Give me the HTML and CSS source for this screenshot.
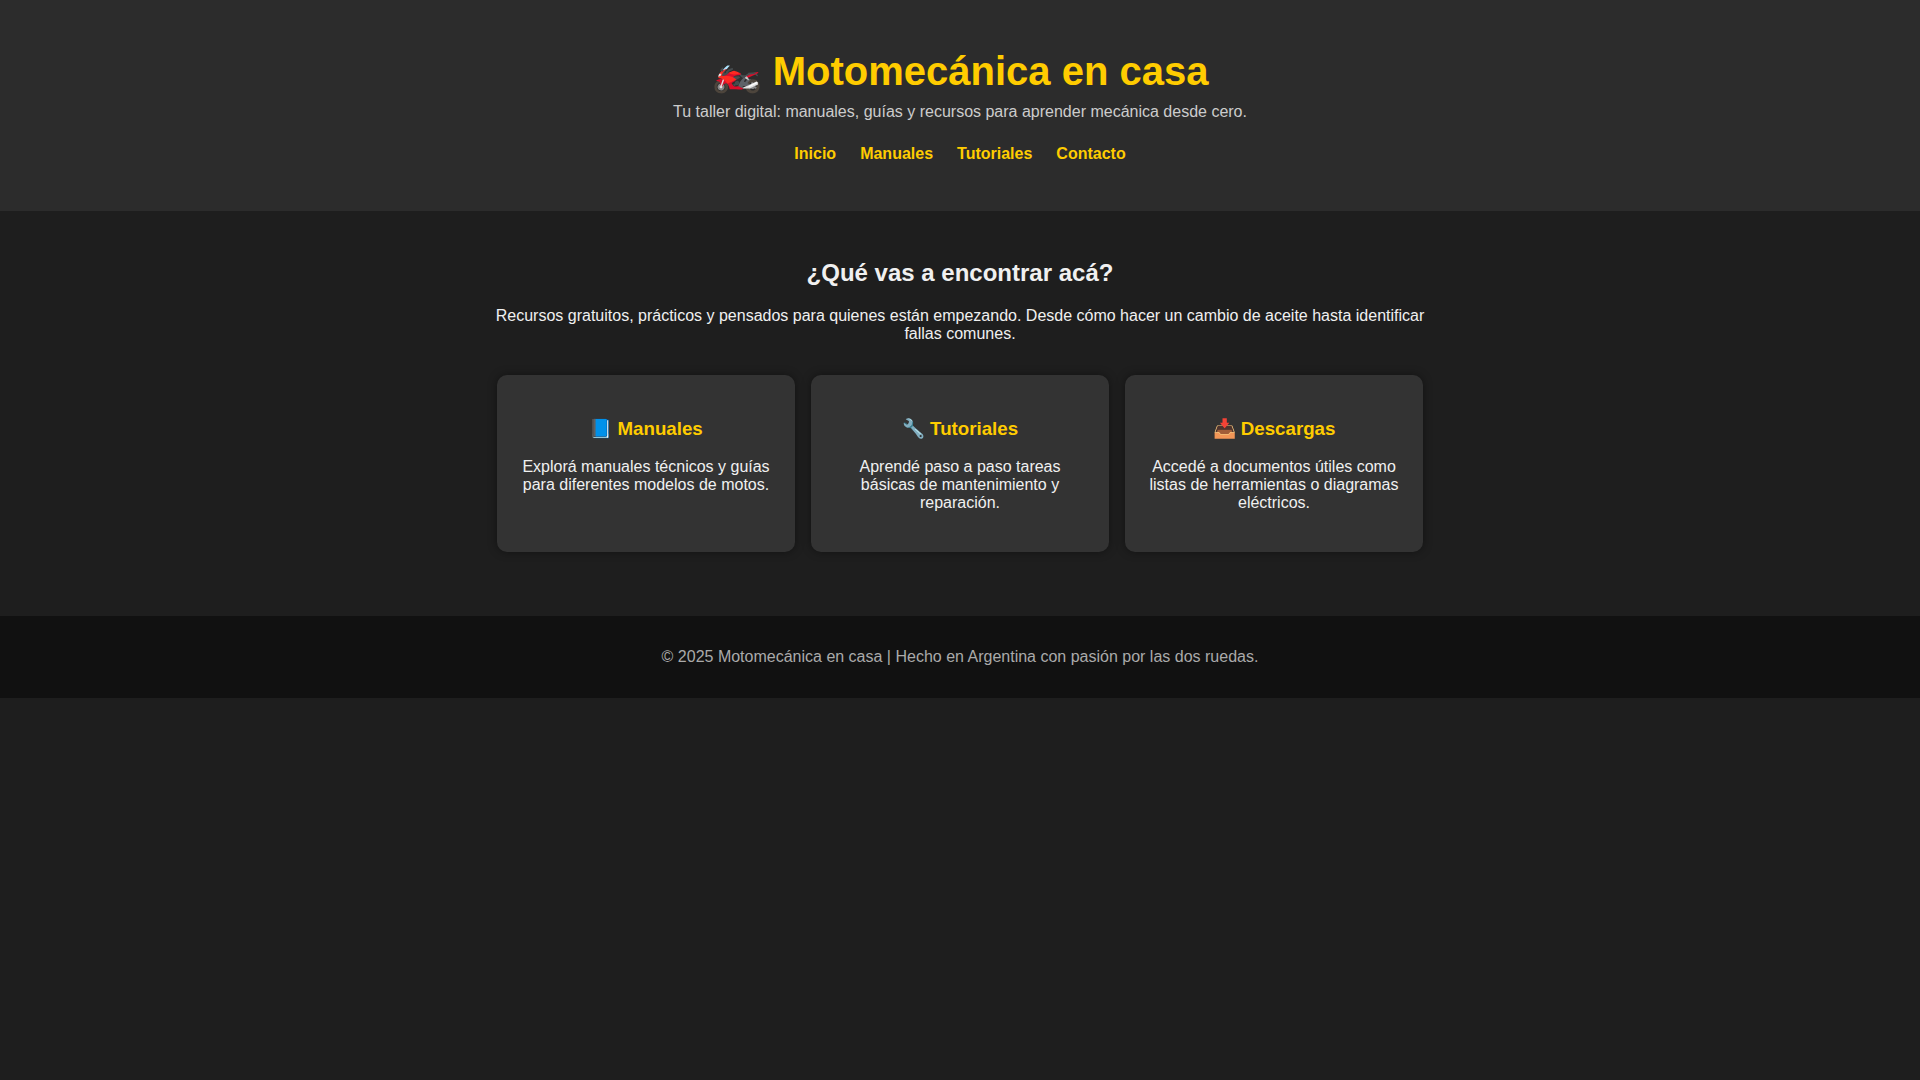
FILE: index.html
```html
<!DOCTYPE html>
<html lang="es">
<head>
  <meta charset="UTF-8" />
  <meta name="viewport" content="width=device-width, initial-scale=1.0" />
  <title>Motomecánica en casa</title>
  <link rel="stylesheet" href="styles.css">
</head>
<body>
  <header>
    <h1>🏍️ Motomecánica en casa</h1>
    <p>Tu taller digital: manuales, guías y recursos para aprender mecánica desde cero.</p>
    <nav>
      <a href="#inicio">Inicio</a>
      <a href="#manuales">Manuales</a>
      <a href="#tutoriales">Tutoriales</a>
      <a href="#contacto">Contacto</a>
    </nav>
  </header>

  <main id="inicio">
    <h2>¿Qué vas a encontrar acá?</h2>
    <p>Recursos gratuitos, prácticos y pensados para quienes están empezando. Desde cómo hacer un cambio de aceite hasta identificar fallas comunes.</p>

    <div class="cards">
      <div class="card" id="manuales">
        <h3>📘 Manuales</h3>
        <p>Explorá manuales técnicos y guías para diferentes modelos de motos.</p>
      </div>
      <div class="card" id="tutoriales">
        <h3>🔧 Tutoriales</h3>
        <p>Aprendé paso a paso tareas básicas de mantenimiento y reparación.</p>
      </div>
      <div class="card">
        <h3>📥 Descargas</h3>
        <p>Accedé a documentos útiles como listas de herramientas o diagramas eléctricos.</p>
      </div>
    </div>
  </main>

  <footer id="contacto">
    <p>© 2025 Motomecánica en casa | Hecho en Argentina con pasión por las dos ruedas.</p>
  </footer>
</body>
</html>
```
FILE: styles.css
```css
body {
  margin: 0;
  font-family: 'Liberation Sans', Arial, sans-serif;
  background-color: #1e1e1e;
  color: #f0f0f0;
}

header {
  background-color: #2c2c2c;
  padding: 48px 16px;
  text-align: center;
}

header h1 {
  margin: 0;
  font-size: 40px;
  color: #ffcc00;
}

header p {
  margin: 8px 0 0;
  color: #cccccc;
}

nav {
  display: flex;
  flex-wrap: wrap;
  justify-content: center;
  gap: 24px;
  margin-top: 24px;
}

nav a {
  color: #ffcc00;
  text-decoration: none;
  font-weight: bold;
}

nav a:hover {
  text-decoration: underline;
}

main {
  max-width: 960px;
  margin: 0 auto;
  padding: 28px 16px 32px;
  text-align: center;
}

.cards {
  display: flex;
  flex-wrap: wrap;
  justify-content: center;
  margin-top: 24px;
}

.card {
  width: 250px;
  margin: 8px;
  padding: 24px;
  background-color: #333333;
  border-radius: 10px;
  box-shadow: 0 0 10px rgba(0, 0, 0, 0.4);
}

.card h3 {
  color: #ffcc00;
}

footer {
  margin-top: 24px;
  padding: 16px;
  background-color: #111111;
  color: #aaaaaa;
  text-align: center;
}
```
